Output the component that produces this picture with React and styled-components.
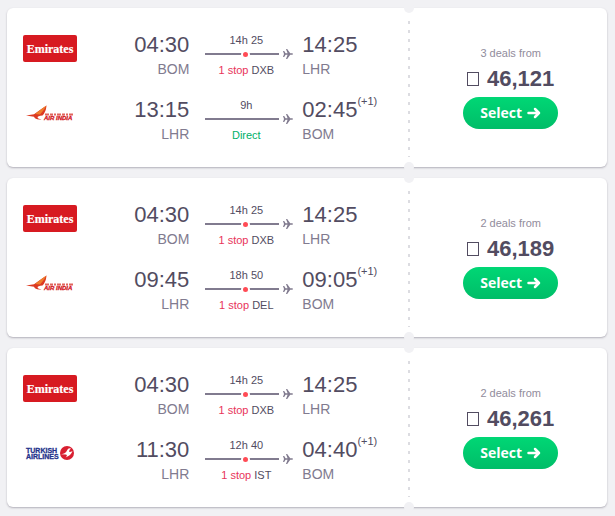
import React from "react";
import styled, { createGlobalStyle } from "styled-components";

const GlobalStyle = createGlobalStyle`
  * {
    box-sizing: border-box;
  }
  body {
    margin: 0;
    background: #f1f1f4;
    color: #524c61;
    font-family: "Liberation Sans", Arial, sans-serif;
  }
`;

const tickets = [
  {
    deals: 3,
    price: "46,121",
    legs: [
      { airline: "emirates", depart: "04:30", from: "BOM", duration: "14h 25", stop: "DXB", arrive: "14:25", to: "LHR" },
      { airline: "airindia", depart: "13:15", from: "LHR", duration: "9h", arrive: "02:45", to: "BOM", days: "(+1)" },
    ],
  },
  {
    deals: 2,
    price: "46,189",
    legs: [
      { airline: "emirates", depart: "04:30", from: "BOM", duration: "14h 25", stop: "DXB", arrive: "14:25", to: "LHR" },
      { airline: "airindia", depart: "09:45", from: "LHR", duration: "18h 50", stop: "DEL", arrive: "09:05", to: "BOM", days: "(+1)" },
    ],
  },
  {
    deals: 2,
    price: "46,261",
    legs: [
      { airline: "emirates", depart: "04:30", from: "BOM", duration: "14h 25", stop: "DXB", arrive: "14:25", to: "LHR" },
      { airline: "turkish", depart: "11:30", from: "LHR", duration: "12h 40", stop: "IST", arrive: "04:40", to: "BOM", days: "(+1)" },
    ],
  },
];

const Emirates = () => (
  <Logo viewBox="0 0 54 27" role="img" aria-label="Emirates">
    <rect width="54" height="27" rx="2" fill="#d71a21" />
    <text x="27" y="18" textAnchor="middle" fill="#fff" stroke="#fff" strokeWidth="0.2" fontFamily="Liberation Serif, serif" fontWeight="700" fontSize="12">
      Emirates
    </text>
  </Logo>
);

const AirIndia = () => (
  <Logo viewBox="0 0 54 27" role="img" aria-label="Air India">
    <path d="M3 15.5 L11 14.2 Q17 10 23.5 5.5 Q23 12 19.5 15.5 Q14.5 16 14.5 17.5 Q15 19 18.5 19.3 Q12.5 20.3 11 16.8 Z" fill="#dc3a22" />
    <path d="M12 14 Q18 9 23.5 5.5 Q21 10.5 17 14.5 Z" fill="#ee7d2c" />
    <path d="M22 14.5 H50" stroke="#e2645d" strokeWidth="2" strokeDasharray="4 1 3 1 2 1" />
    <text x="21" y="20" fill="#d3161c" stroke="#d3161c" strokeWidth="0.3" fontFamily="Liberation Sans, sans-serif" fontWeight="700" fontStyle="italic" fontSize="6">
      AIR INDIA
    </text>
  </Logo>
);

const Turkish = () => (
  <Logo viewBox="0 0 54 27" role="img" aria-label="Turkish Airlines">
    <g fill="#24338c" stroke="#24338c" strokeWidth="0.3" fontFamily="Liberation Sans, sans-serif" fontWeight="700" fontSize="7">
      <text x="3" y="13">TURKISH</text>
      <text x="3" y="19">AIRLINES</text>
    </g>
    <circle cx="44" cy="13" r="7" fill="#d91f31" />
    <path d="M38 14.2 Q43 13.5 44 10.5 Q45 7.8 48 8.5 Q45.8 9.5 46.2 12 Q47.8 12.2 49.5 11 Q48 15.5 42.5 17.5 Q45 15.5 43 14.6 Q41 14.2 38 14.2 Z" fill="#fff" />
  </Logo>
);

const logos = { emirates: Emirates, airindia: AirIndia, turkish: Turkish };

const Leg = ({ leg }) => {
  const Airline = logos[leg.airline];
  return (
    <LegRow>
      <Airline />
      <Point $align="right">
        <Time>{leg.depart}</Time>
        <Code>{leg.from}</Code>
      </Point>
      <Route>
        <Duration>{leg.duration}</Duration>
        <Track>
          <Line>{leg.stop && <Dot />}</Line>
          <Plane viewBox="0 0 10 10" aria-hidden="true">
            <path d="M0 2 H1.2 L2.6 4.3 H4.6 L3 0 H4.2 L7.2 4.3 H9 Q10 4.5 10 5 Q10 5.5 9 5.7 H7.2 L4.2 10 H3 L4.6 5.7 H2.6 L1.2 8 H0 L1 5 Z" />
          </Plane>
        </Track>
        {leg.stop ? (
          <Stops>
            <StopCount>1 stop</StopCount> {leg.stop}
          </Stops>
        ) : (
          <Stops $direct>Direct</Stops>
        )}
      </Route>
      <Point>
        <Time>
          {leg.arrive}
          {leg.days && <Days>{leg.days}</Days>}
        </Time>
        <Code>{leg.to}</Code>
      </Point>
    </LegRow>
  );
};

const App = () => {
  return (
    <>
      <GlobalStyle />
      <List>
        {tickets.map(ticket => (
          <Ticket key={ticket.price}>
            <Legs>
              {ticket.legs.map(leg => (
                <Leg key={leg.from} leg={leg} />
              ))}
            </Legs>
            <Divider />
            <Deal>
              <DealCount>{ticket.deals} deals from</DealCount>
              <Price>
                <Currency />
                {ticket.price}
              </Price>
              <Select type="button">
                Select
                <Arrow viewBox="0 0 14 12" aria-hidden="true">
                  <path d="M1.5 6 H12 M8 2 L12 6 L8 10" />
                </Arrow>
              </Select>
            </Deal>
          </Ticket>
        ))}
      </List>
    </>
  );
};

export default App;

const List = styled.main`
  display: flex;
  flex-direction: column;
  gap: 11px;
  padding: 8px 8px 8px 7px;
`;

const Ticket = styled.article`
  display: flex;
  background: #fff;
  border-radius: 6px;
  box-shadow: 0 1px 2px rgba(60, 55, 75, 0.35);
`;

const Legs = styled.div`
  flex: 2;
  display: flex;
  flex-direction: column;
  gap: 16px;
  padding: 23px 0 22px 16px;
`;

const LegRow = styled.div`
  display: grid;
  grid-template-columns: 54px 1fr 88px 111px;
  align-items: start;
`;

const Logo = styled.svg`
  width: 54px;
  height: 27px;
  margin-top: 4px;
`;

const Point = styled.div`
  padding: 0 16px 0 9px;
  text-align: ${props => props.$align || "left"};
`;

const Time = styled.div`
  font-size: 22px;
  line-height: 28px;
  white-space: nowrap;
`;

const Days = styled.sup`
  font-size: 11px;
  line-height: 0;
  vertical-align: 12px;
`;

const Code = styled.div`
  color: #817b8f;
  font-size: 14px;
  line-height: 20px;
`;

const Route = styled.div`
  display: flex;
  flex-direction: column;
  gap: 2px;
  padding-top: 1px;
`;

const Duration = styled.div`
  padding-right: 6px;
  font-size: 11px;
  line-height: 16px;
  text-align: center;
`;

const Stops = styled(Duration)`
  color: ${props => (props.$direct ? "#00b068" : "#524c61")};
  line-height: 20px;
`;

const StopCount = styled.span`
  color: #e8345a;
`;

const Track = styled.div`
  display: flex;
  align-items: center;
  gap: 4px;
  height: 8px;
`;

const Line = styled.div`
  flex: 1;
  display: flex;
  align-items: center;
  justify-content: center;
  height: 2px;
  padding-left: 7px;
  background: #817b8f;
`;

const Dot = styled.span`
  flex: none;
  width: 9px;
  height: 9px;
  border: 2px solid #fff;
  border-radius: 50%;
  background: #ff4b55;
`;

const Plane = styled.svg`
  width: 10px;
  height: 10px;
  fill: #817b8f;
`;

const Divider = styled.div`
  position: relative;
  width: 10px;
  background: repeating-linear-gradient(#dcdce1 0 3px, transparent 3px 9px) center 13px / 2px calc(100% - 23px) no-repeat;

  &::before,
  &::after {
    content: "";
    position: absolute;
    left: 0;
    width: 10px;
    height: 10px;
    border-radius: 50%;
    background: #f1f1f4;
  }
  &::before {
    top: -5px;
  }
  &::after {
    bottom: -5px;
  }
`;

const Deal = styled.div`
  flex: 1;
  display: flex;
  flex-direction: column;
  align-items: center;
  justify-content: center;
  padding: 0 1px 2px;
`;

const DealCount = styled.div`
  color: #918c9c;
  font-size: 11px;
  line-height: 16px;
`;

const Price = styled.div`
  display: flex;
  align-items: center;
  gap: 8px;
  font-size: 22px;
  font-weight: 700;
  line-height: 36px;
`;

const Currency = styled.span`
  width: 12px;
  height: 14px;
  border: 1px solid #524c61;
`;

const Select = styled.button`
  display: flex;
  align-items: center;
  gap: 5px;
  height: 32px;
  padding: 0 17px;
  border: none;
  border-radius: 16px;
  background: linear-gradient(#00d775, #00bd68);
  color: #fff;
  font-family: "Open Sans", "Noto Sans", sans-serif;
  font-size: 14px;
  font-weight: 700;
  cursor: pointer;
`;

const Arrow = styled.svg`
  width: 14px;
  height: 12px;
  fill: none;
  stroke: #fff;
  stroke-width: 2.5;
  stroke-linecap: round;
  stroke-linejoin: round;
`;
